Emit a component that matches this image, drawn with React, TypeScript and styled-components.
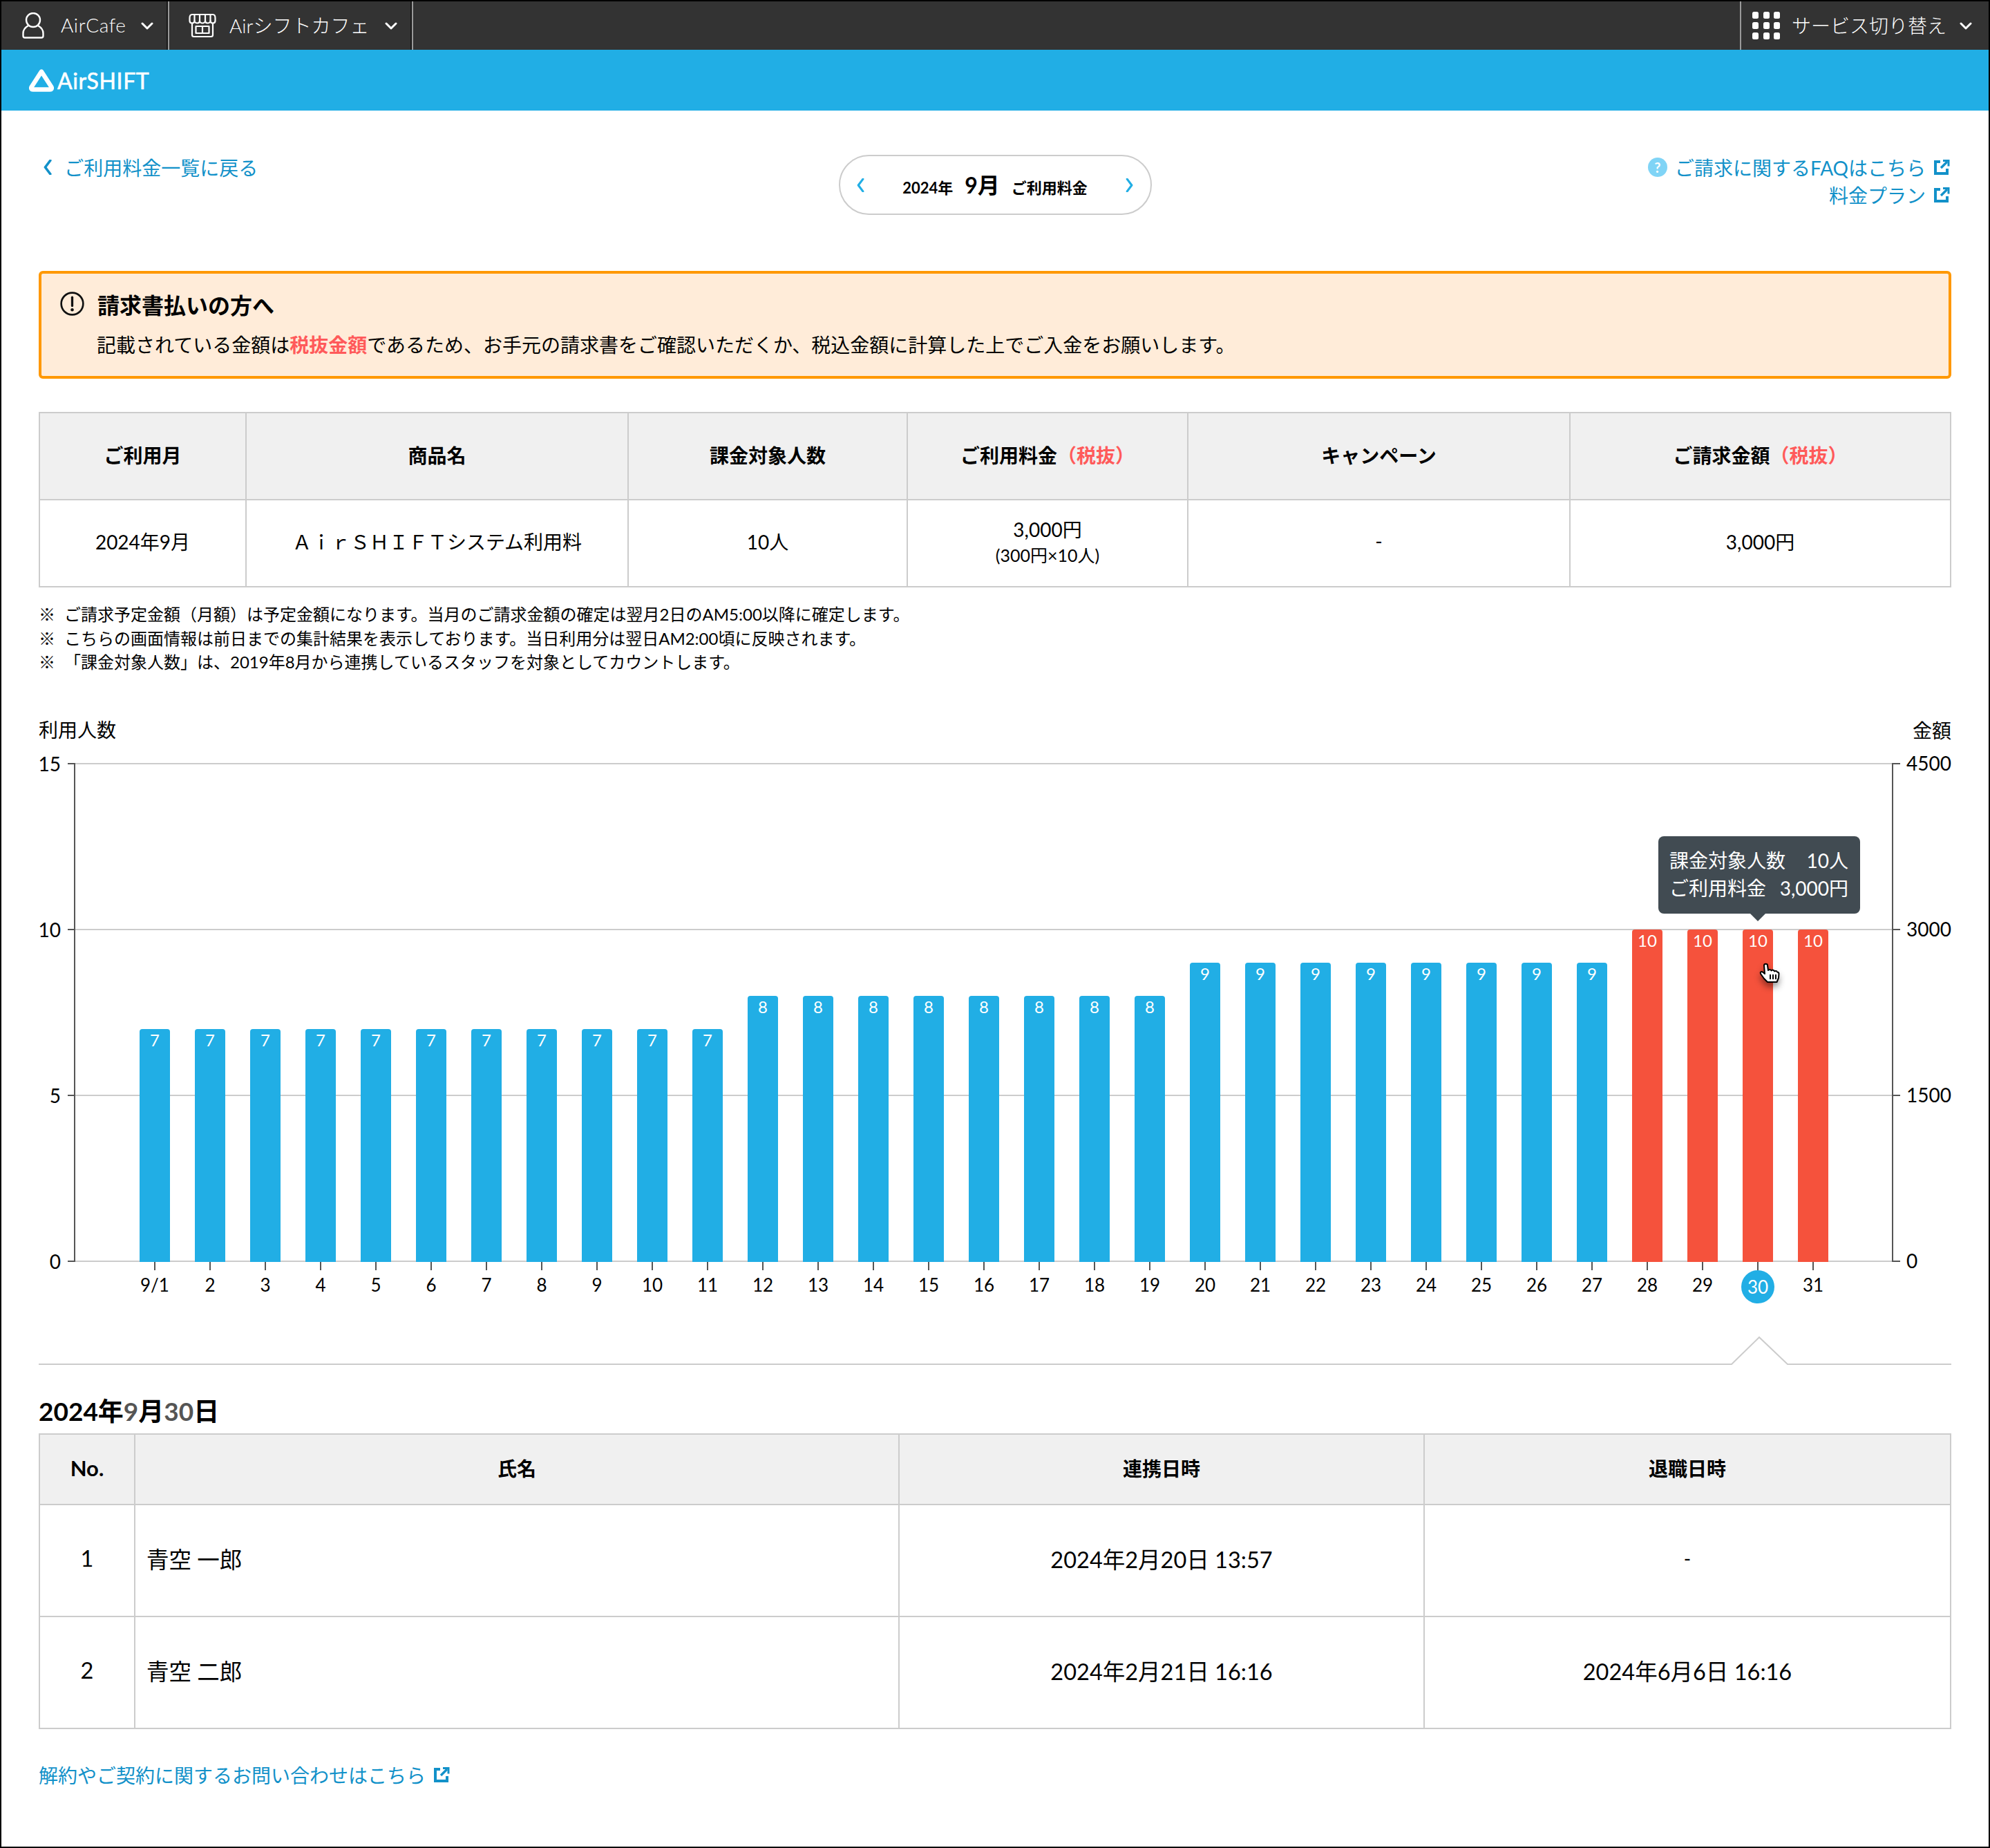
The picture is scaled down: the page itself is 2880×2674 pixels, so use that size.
import React from "react";
import styled, { createGlobalStyle } from "styled-components";

const GlobalStyle = createGlobalStyle`
  * { box-sizing: border-box; }
  body {
    margin: 0;
    background: #fff;
    color: #111;
    font-family: Lato, "Noto Sans CJK JP", sans-serif;
    font-weight: 400;
    font-size: 28px;
  }
`;

const BLUE = "#21aee5";
const LINK = "#1291c9";
const LINE = "#cccccc";
const AXIS = "#555555";

// daily user counts for the month
const days = [7, 7, 7, 7, 7, 7, 7, 7, 7, 7, 7, 8, 8, 8, 8, 8, 8, 8, 8, 9, 9, 9, 9, 9, 9, 9, 9, 10, 10, 10, 10];
const selectedDay = 30;

const Chevron = ({ dir = "down", size = 18, color = "#fff", sw = 3 }: { dir?: "down" | "left" | "right"; size?: number; color?: string; sw?: number }) => {
    const d = dir === "down" ? "M2 2 L9 9 L16 2" : dir === "left" ? "M8 1 L2 9 L8 17" : "M2 1 L8 9 L2 17";
    const w = dir === "down" ? 18 : 10;
    const h = dir === "down" ? 11 : 18;
    return (
        <svg width={dir === "down" ? size : (size * 10) / 18} height={dir === "down" ? (size * 11) / 18 : size} viewBox={`0 0 ${w} ${h}`} fill="none">
            <path d={d} stroke={color} strokeWidth={sw} strokeLinecap="round" strokeLinejoin="round" />
        </svg>
    );
};

const PersonIcon = () => (
    <svg width="32" height="38" viewBox="0 0 32 38" fill="none" stroke="#fff" strokeWidth="2.4">
        <circle cx="16" cy="11" r="10" />
        <path d="M9 19 C4 22 1.5 26 1.5 30 V34 C1.5 35.5 2.5 36.5 4 36.5 H28 C29.5 36.5 30.5 35.5 30.5 34 V30 C30.5 26 28 22 23 19" strokeLinejoin="round" />
    </svg>
);

const StoreIcon = () => (
    <svg width="40" height="36" viewBox="0 0 40 36" fill="none" stroke="#fff" strokeWidth="2.2" strokeLinejoin="round">
        <path d="M5 2 H35 C37.5 2 38.5 4 38.5 7 V11 C38.5 13 37 14.5 35 14.5 C33 14.5 31.5 13 31.5 11 C31.5 13 29.5 14.5 27.5 14.5 C25.5 14.5 24 13 24 11 C24 13 22 14.5 20 14.5 C18 14.5 16 13 16 11 C16 13 14.5 14.5 12.5 14.5 C10.5 14.5 8.5 13 8.5 11 C8.5 13 7 14.5 5 14.5 C3 14.5 1.5 13 1.5 11 V7 C1.5 4 2.5 2 5 2 Z" />
        <path d="M8.5 3 V11 M16 3 V11 M24 3 V11 M31.5 3 V11" />
        <path d="M5 15 V31.5 C5 33 6 34 7.5 34 H32.5 C34 34 35 33 35 31.5 V15" />
        <rect x="10.5" y="19" width="19" height="10" />
        <path d="M20 19 V29" />
    </svg>
);

const LogoMark = () => (
    <svg width="36" height="33" viewBox="0 0 36 33" fill="none">
        <path d="M18 3.5 L32.5 26 C33.5 28 32.5 29.5 30.5 29.5 H5.5 C3.5 29.5 2.5 28 3.5 26 Z" stroke="#fff" strokeWidth="6.4" strokeLinejoin="round" />
    </svg>
);

const ExternalIcon = () => (
    <svg width="24" height="24" viewBox="0 0 24 24" fill="none" stroke={LINK} strokeWidth="4">
        <path d="M10 4 H3 V21 H20 V14" />
        <path d="M11 13 L20 4" strokeWidth="3.4" />
        <path d="M14 2.5 H22 V10.5" strokeWidth="3" />
    </svg>
);

const ExclamationIcon = () => (
    <svg width="35" height="35" viewBox="0 0 34 34" fill="none">
        <circle cx="17" cy="17" r="15.4" stroke="#111" strokeWidth="2.6" />
        <path d="M17 8 V20" stroke="#111" strokeWidth="3.2" strokeLinecap="round" />
        <circle cx="17" cy="25.5" r="2.2" fill="#111" />
    </svg>
);

// the mouse pointer caught in the screenshot
const HandCursor = () => (
    <svg width="60" height="60" viewBox="0 0 60 60" fill="none">
        <path
            d="M18 29 C17 26.5 19 25.5 21 26.5 L24 29 L23 17 C23 14 28 14 28 17 L29 24 C30 22.5 33 22.5 33.5 24.5 C35 23 37.5 23.5 38 25.5 C39.5 24.5 41.5 25 42 26.5 C43.5 26.5 44.5 27.5 44.5 29 L44 35 L41.5 41 L28 41 L23 36 Z"
            fill="#fff"
            stroke="#000"
            strokeWidth="2"
            strokeLinejoin="round"
        />
        <path d="M32 30 V37 M36 30 V37 M40 30 V37" stroke="#000" strokeWidth="2" />
    </svg>
);

const Bar = ({ x, value }: { x: number; value: number }) => {
    const top = 1825 - value * 48;
    return (
        <g>
            <path d={`M${x} 1826 V${top + 4} Q${x} ${top} ${x + 4} ${top} H${x + 40} Q${x + 44} ${top} ${x + 44} ${top + 4} V1826 Z`} fill={value === 10 ? "#f5523c" : BLUE} />
            <BarValue x={x + 22} y={top + 15}>{value}</BarValue>
        </g>
    );
};

const UsageChart = () => (
    <ChartSvg viewBox="56 1030 2768 946" width="2768" height="946">
        <AxisTitle x={56} y={1056}>利用人数</AxisTitle>
        <AxisTitle x={2824} y={1057} textAnchor="end">金額</AxisTitle>

        {[0, 5, 10, 15].map((v) => {
            const y = 1825 - v * 48;
            return (
                <g key={v}>
                    <line x1={108} x2={2739} y1={y} y2={y} stroke={LINE} strokeWidth="2" />
                    <line x1={98} x2={108} y1={y} y2={y} stroke={AXIS} strokeWidth="2" />
                    <line x1={2739} x2={2750} y1={y} y2={y} stroke={AXIS} strokeWidth="2" />
                    <AxisLabel x={88} y={y} textAnchor="end">{v}</AxisLabel>
                    <AxisLabel x={2759} y={y - 1}>{v * 300}</AxisLabel>
                </g>
            );
        })}
        <line x1={108} x2={108} y1={1104} y2={1826} stroke={AXIS} strokeWidth="2" />
        <line x1={2739} x2={2739} y1={1104} y2={1826} stroke={AXIS} strokeWidth="2" />

        {days.map((v, i) => (
            <Bar key={i} x={202 + 80 * i} value={v} />
        ))}

        {days.map((_, i) => {
            const cx = 224 + 80 * i;
            const day = i + 1;
            return (
                <g key={i}>
                    <line x1={cx} x2={cx} y1={1826} y2={1838} stroke={AXIS} strokeWidth="2" />
                    {day === selectedDay && <circle cx={cx} cy={1862} r={24} fill={BLUE} />}
                    <DayLabel x={cx} y={day === selectedDay ? 1862 : 1859} $active={day === selectedDay}>
                        {i === 0 ? "9/1" : day}
                    </DayLabel>
                </g>
            );
        })}

        <path d="M56 1974 H2506 L2546 1935 L2587 1974 H2824" fill="none" stroke={LINE} strokeWidth="2" />
    </ChartSvg>
);

const App = () => (
    <Frame>
        <GlobalStyle />
        <TopBar>
            <TopItem $pl={30} $w={241}>
                <PersonIcon />
                <TopLabel $ml={24} $ls={0.6}>AirCafe</TopLabel>
                <ChevronSlot $ml={21}><Chevron /></ChevronSlot>
            </TopItem>
            <TopItem $pl={30} $w={353}>
                <StoreIcon />
                <TopLabel $ml={19}>Airシフトカフェ</TopLabel>
                <ChevronSlot $ml={23}><Chevron /></ChevronSlot>
            </TopItem>
            <ServiceItem>
                <AppGrid>
                    {Array.from({ length: 9 }).map((_, i) => (
                        <AppDot key={i} />
                    ))}
                </AppGrid>
                <TopLabel $ml={17}>サービス切り替え</TopLabel>
                <ChevronSlot $ml={19}><Chevron /></ChevronSlot>
            </ServiceItem>
        </TopBar>

        <BrandBar>
            <LogoMark />
            <BrandName>AirSHIFT</BrandName>
        </BrandBar>

        <Content>
            <SubHeader>
                <BackLink>
                    <Chevron dir="left" size={22} color={LINK} sw={3} />
                    ご利用料金一覧に戻る
                </BackLink>
                <MonthPill>
                    <Chevron dir="left" size={20} color={BLUE} sw={2.8} />
                    <MonthText>
                        <span>2024年</span>
                        <MonthBig>9月</MonthBig>
                        <span>ご利用料金</span>
                    </MonthText>
                    <Chevron dir="right" size={20} color={BLUE} sw={2.8} />
                </MonthPill>
                <SideLinks>
                    <TextLink>
                        <HelpBadge>?</HelpBadge>
                        ご請求に関するFAQはこちら
                        <ExternalIcon />
                    </TextLink>
                    <TextLink>
                        料金プラン
                        <ExternalIcon />
                    </TextLink>
                </SideLinks>
            </SubHeader>

            <Alert>
                <AlertTitle>
                    <ExclamationIcon />
                    請求書払いの方へ
                </AlertTitle>
                <AlertBody>
                    記載されている金額は<Accent>税抜金額</Accent>であるため、お手元の請求書をご確認いただくか、税込金額に計算した上でご入金をお願いします。
                </AlertBody>
            </Alert>

            <DataTable>
                <colgroup>
                    {[299, 553, 404, 406, 553, 551].map((w, i) => (
                        <col key={i} width={w} />
                    ))}
                </colgroup>
                <thead>
                    <tr>
                        <Th $h={126}>ご利用月</Th>
                        <Th $h={126}>商品名</Th>
                        <Th $h={126}>課金対象人数</Th>
                        <Th $h={126}>ご利用料金<Accent>（税抜）</Accent></Th>
                        <Th $h={126}>キャンペーン</Th>
                        <Th $h={126}>ご請求金額<Accent>（税抜）</Accent></Th>
                    </tr>
                </thead>
                <tbody>
                    <tr>
                        <Td $h={126}>2024年9月</Td>
                        <Td $h={126}>ＡｉｒＳＨＩＦＴシステム利用料</Td>
                        <Td $h={126}>10人</Td>
                        <Td $h={126}>
                            3,000円
                            <SubAmount>(300円×10人)</SubAmount>
                        </Td>
                        <Td $h={126}>-</Td>
                        <Td $h={126}>3,000円</Td>
                    </tr>
                </tbody>
            </DataTable>

            <Notes>
                <Note><NoteMark>※</NoteMark>ご請求予定金額（月額）は予定金額になります。当月のご請求金額の確定は翌月2日のAM5:00以降に確定します。</Note>
                <Note><NoteMark>※</NoteMark>こちらの画面情報は前日までの集計結果を表示しております。当日利用分は翌日AM2:00頃に反映されます。</Note>
                <Note><NoteMark>※</NoteMark>「課金対象人数」は、2019年8月から連携しているスタッフを対象としてカウントします。</Note>
            </Notes>

            <ChartArea>
                <UsageChart />
                <Tooltip>
                    <TooltipRow><span>課金対象人数</span><span>10人</span></TooltipRow>
                    <TooltipRow><span>ご利用料金</span><span>3,000円</span></TooltipRow>
                </Tooltip>
                <CursorLayer><HandCursor /></CursorLayer>
            </ChartArea>

            <DateHeading>2024年<Muted>9</Muted>月<Muted>30</Muted>日</DateHeading>

            <DataTable>
                <colgroup>
                    {[138, 1106, 760, 762].map((w, i) => (
                        <col key={i} width={w} />
                    ))}
                </colgroup>
                <thead>
                    <tr>
                        <Th $h={102} $size={31}>No.</Th>
                        <Th $h={102}>氏名</Th>
                        <Th $h={102}>連携日時</Th>
                        <Th $h={102}>退職日時</Th>
                    </tr>
                </thead>
                <tbody>
                    <tr>
                        <Td $h={162} $large>1</Td>
                        <Td $h={162} $large $left>青空 一郎</Td>
                        <Td $h={162} $large>2024年2月20日 13:57</Td>
                        <Td $h={162}>-</Td>
                    </tr>
                    <tr>
                        <Td $h={162} $large>2</Td>
                        <Td $h={162} $large $left>青空 二郎</Td>
                        <Td $h={162} $large>2024年2月21日 16:16</Td>
                        <Td $h={162} $large>2024年6月6日 16:16</Td>
                    </tr>
                </tbody>
            </DataTable>

            <ContactLink>
                解約やご契約に関するお問い合わせはこちら
                <ExternalIcon />
            </ContactLink>
        </Content>
    </Frame>
);

export default App;

// Styled Components

const Frame = styled.div`
  width: 2880px;
  height: 2674px;
  border: 2px solid #000;
  background: #fff;
  overflow: hidden;
`;

const TopBar = styled.header`
  display: flex;
  height: 70px;
  background: #333333;
  color: #fff;
`;

const TopItem = styled.div<{ $pl: number; $w: number }>`
  display: flex;
  align-items: center;
  width: ${({ $w }) => $w}px;
  padding-left: ${({ $pl }) => $pl}px;
  border-right: 2px solid #1a1a1a;
  box-shadow: 2px 0 0 #9a9a9a;
`;

const ServiceItem = styled.div`
  display: flex;
  align-items: center;
  margin-left: auto;
  padding-left: 16px;
  width: 360px;
  border-left: 2px solid #9a9a9a;
`;

const TopLabel = styled.span<{ $ml: number; $ls?: number }>`
  margin-left: ${({ $ml }) => $ml}px;
  padding-bottom: 3px;
  font-size: 28px;
  font-weight: 300;
  letter-spacing: ${({ $ls }) => $ls ?? 0}px;
  white-space: nowrap;
`;

const ChevronSlot = styled.span<{ $ml: number }>`
  display: flex;
  margin-left: ${({ $ml }) => $ml}px;
`;

const AppGrid = styled.div`
  display: grid;
  grid-template-columns: repeat(3, 9px);
  grid-auto-rows: 10px;
  gap: 5px 6.5px;
`;

const AppDot = styled.i`
  display: block;
  background: #fff;
  border-radius: 2.5px;
`;

const BrandBar = styled.div`
  display: flex;
  align-items: center;
  height: 88px;
  padding-left: 40px;
  background: ${BLUE};
`;

const BrandName = styled.span`
  margin-left: 5px;
  color: #fff;
  font-size: 32px;
  font-weight: 400;
  letter-spacing: 0.6px;
  -webkit-text-stroke: 0.6px #fff;
`;

const Content = styled.main`
  padding: 0 54px;
`;

const SubHeader = styled.div`
  display: grid;
  grid-template-columns: 1fr auto 1fr;
  padding-top: 64px;
  margin-bottom: 81px;
`;

const BackLink = styled.a`
  display: flex;
  align-items: center;
  gap: 18px;
  height: 40px;
  padding: 0 0 4px 7px;
  color: ${LINK};
`;

const MonthPill = styled.div`
  display: flex;
  align-items: center;
  justify-content: space-between;
  width: 453px;
  height: 87px;
  padding: 0 24px;
  border: 2px solid ${LINE};
  border-radius: 44px;
`;

const MonthText = styled.div`
  display: flex;
  align-items: baseline;
  gap: 17px;
  padding-bottom: 4px;
  color: #000;
  font-size: 22px;
  font-weight: 700;
`;

const MonthBig = styled.span`
  font-size: 32px;
`;

const SideLinks = styled.div`
  display: flex;
  flex-direction: column;
  align-items: flex-end;
`;

const TextLink = styled.a`
  display: flex;
  align-items: center;
  gap: 11px;
  height: 40px;
  padding: 0 2px 4px 0;
  color: ${LINK};
`;

const HelpBadge = styled.span`
  display: flex;
  align-items: center;
  justify-content: center;
  width: 28px;
  height: 28px;
  border-radius: 50%;
  background: #80d4f6;
  color: #fff;
  font-size: 20px;
  font-weight: 700;
`;

const Alert = styled.section`
  height: 156px;
  padding: 25px 27px;
  border: 4px solid #ff9800;
  border-radius: 6px;
  background: #ffecd9;
`;

const AlertTitle = styled.h2`
  display: flex;
  align-items: center;
  gap: 19px;
  height: 40px;
  margin: 0 0 18px;
  padding-bottom: 3px;
  color: #000;
  font-size: 32px;
  font-weight: 700;
`;

const AlertBody = styled.p`
  margin: 0;
  padding-left: 53px;
  line-height: 40px;
  color: #000;
`;

const Accent = styled.span`
  color: #ff5a5a;
  font-weight: 700;
`;

const DataTable = styled.table`
  width: 2766px;
  margin-top: 48px;
  border-collapse: collapse;
  table-layout: fixed;
`;

const Th = styled.th<{ $h: number; $size?: number }>`
  height: ${({ $h }) => $h}px;
  padding: 0 0 4px;
  border: 2px solid ${LINE};
  background: #f0f0f0;
  color: #000;
  font-size: ${({ $size }) => $size ?? 28}px;
  font-weight: 700;
`;

const Td = styled.td<{ $h: number; $large?: boolean; $left?: boolean }>`
  height: ${({ $h }) => $h}px;
  padding: 0 0 6px ${({ $left }) => ($left ? "16px" : "0")};
  border: 2px solid ${LINE};
  color: #000;
  font-size: ${({ $large }) => ($large ? "32.5px" : "28px")};
  text-align: ${({ $left }) => ($left ? "left" : "center")};
`;

const SubAmount = styled.small`
  display: block;
  font-size: 25px;
  line-height: 36px;
`;

const Notes = styled.div`
  margin-top: 22px;
`;

const Note = styled.p`
  display: flex;
  margin: 0;
  font-size: 24px;
  line-height: 34.5px;
  color: #000;
`;

const NoteMark = styled.span`
  flex: 0 0 37px;
`;

const ChartArea = styled.div`
  position: relative;
  margin-top: 54px;
  height: 946px;
`;

const ChartSvg = styled.svg`
  display: block;
`;

const AxisTitle = styled.text`
  font-size: 28px;
  fill: #000;
  dominant-baseline: central;
`;

const AxisLabel = styled.text`
  font-size: 28px;
  fill: #000;
  dominant-baseline: central;
`;

const BarValue = styled.text`
  font-size: 24px;
  fill: #fff;
  text-anchor: middle;
  dominant-baseline: central;
`;

const DayLabel = styled.text<{ $active?: boolean }>`
  font-size: 26px;
  fill: ${({ $active }) => ($active ? "#fff" : "#000")};
  text-anchor: middle;
  dominant-baseline: central;
`;

const Tooltip = styled.div`
  position: absolute;
  left: 2344px;
  top: 180px;
  width: 292px;
  height: 112px;
  padding: 15px 17px 15px 16px;
  border-radius: 8px;
  background: #414b52;
  color: #fff;
  font-size: 28px;

  &::after {
    content: "";
    position: absolute;
    left: 133px;
    bottom: -11px;
    border-left: 11px solid transparent;
    border-right: 11px solid transparent;
    border-top: 11px solid #414b52;
  }
`;

const TooltipRow = styled.div`
  display: flex;
  justify-content: space-between;
  line-height: 40px;
`;

const CursorLayer = styled.div`
  position: absolute;
  left: 2474px;
  top: 350px;
  width: 60px;
  height: 60px;
  filter: drop-shadow(0 6px 5px rgba(0, 0, 0, 0.4));
`;

const DateHeading = styled.h3`
  margin: 41px 0 0;
  height: 50px;
  line-height: 50px;
  color: #000;
  font-size: 37px;
  font-weight: 700;

  & + table {
    margin-top: 7px;
  }
`;

const Muted = styled.span`
  color: #555;
`;

const ContactLink = styled.a`
  display: flex;
  align-items: center;
  gap: 11px;
  height: 40px;
  margin-top: 46px;
  color: ${LINK};
`;
